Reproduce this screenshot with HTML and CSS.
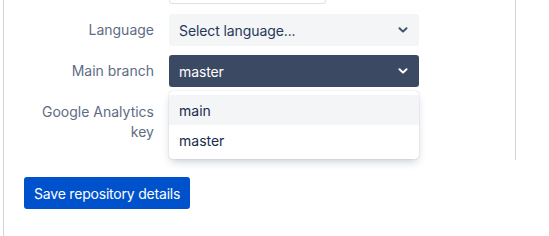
FILE: index.html
```html
<!DOCTYPE html>
<html lang="en">

<head>
    <meta charset="UTF-8" />
    <meta name="viewport" content="width=device-width, initial-scale=1.0" />
    <title>Repository details</title>
    <link rel="stylesheet" href="styles.css">
</head>

<body>
    <div class="page">
        <div class="fields">
            <div class="form-row first">
                <span class="label"></span>
                <div class="text-input"></div>
            </div>
            <div class="form-row">
                <label class="label">Language</label>
                <div class="select">
                    <span>Select language...</span>
                    <svg class="chevron" viewBox="0 0 10 6"><path d="M1.5 1.2 L5 4.6 L8.5 1.2" /></svg>
                </div>
            </div>
            <div class="form-row">
                <label class="label">Main branch</label>
                <div class="select-wrap">
                    <div class="select active">
                        <span>master</span>
                        <svg class="chevron" viewBox="0 0 10 6"><path d="M1.5 1.2 L5 4.6 L8.5 1.2" /></svg>
                    </div>
                    <ul class="menu">
                        <li class="hover">main</li>
                        <li>master</li>
                    </ul>
                </div>
            </div>
            <div class="form-row">
                <label class="label">Google Analytics key</label>
                <div class="text-input wide"></div>
            </div>
        </div>
        <button class="save">Save repository details</button>
    </div>
</body>

</html>
```

FILE: styles.css
```css
:root{
    --blue: #0052cc;
    --dark: #3c4962;
    --light: #f4f5f7;
    --text: #172b4d;
    --muted: #5e6c84;
    --line: #d4d4d4;
}

body{
    margin: 0;
    font-family: Inter, "Liberation Sans", sans-serif;
    font-size: 14px;
    color: var(--text);
    background: #fff;
}
.page{
    margin-left: 3px;
    border-left: 1px solid var(--line);
    height: 236px;
    box-sizing: border-box;
    overflow: hidden;
}
.fields{
    width: 512px;
    border-right: 1px solid var(--line);
    margin-top: -28px;
    padding-left: 30px;
    padding-bottom: 18px;
    box-sizing: border-box;
    display: flex;
    flex-direction: column;
    gap: 9px;
}
.form-row{
    display: grid;
    grid-template-columns: 120px 250px;
    column-gap: 15px;
    align-items: start;
}
.form-row.first{
    margin-bottom: 1px;
}
.label{
    text-align: right;
    color: var(--muted);
    line-height: 20px;
    padding-top: 6px;
}
.text-input{
    width: 157px;
    height: 32px;
    box-sizing: border-box;
    border: 1px solid #dfe1e6;
    border-radius: 3px;
    background: #fff;
}
.text-input.wide{
    width: 250px;
}
.select-wrap{
    position: relative;
}
.select{
    height: 32px;
    box-sizing: border-box;
    padding: 0 10px;
    display: flex;
    align-items: center;
    justify-content: space-between;
    background: var(--light);
    border-radius: 3px;
    color: #253858;
    letter-spacing: -0.1px;
}
.select.active{
    background: var(--dark);
    color: #fff;
}
.chevron{
    width: 10px;
    height: 6px;
    margin-right: 1px;
    fill: none;
    stroke: #42526e;
    stroke-width: 2;
    stroke-linecap: round;
    stroke-linejoin: round;
}
.select.active .chevron{
    stroke: #fff;
}
.menu{
    position: absolute;
    top: 36px;
    left: 0;
    width: 250px;
    margin: 0;
    padding: 4px 0;
    list-style: none;
    background: #fff;
    border-radius: 4px;
    box-shadow: 0 4px 8px -2px rgba(9, 30, 66, 0.25), 0 0 1px rgba(9, 30, 66, 0.31);
    z-index: 2;
}
.menu li{
    height: 30px;
    line-height: 31px;
    padding: 0 10px;
    color: var(--text);
}
.menu li.hover{
    background: var(--light);
}
.save{
    margin: 17px 0 0 20px;
    height: 32px;
    padding: 0 10px;
    border: none;
    border-radius: 3px;
    background: var(--blue);
    color: #fff;
    font-family: inherit;
    font-size: 14px;
    letter-spacing: -0.2px;
}
```
